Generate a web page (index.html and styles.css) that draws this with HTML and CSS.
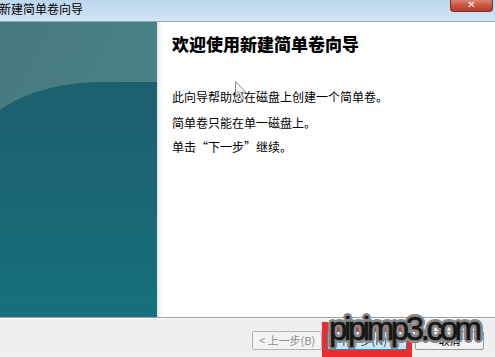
FILE: index.html
```html
<!DOCTYPE html>
<html lang="zh-CN">
<head>
<meta charset="utf-8">
<title>新建简单卷向导</title>
<link rel="stylesheet" href="styles.css">
</head>
<body>
<div class="window">
  <div class="titlebar">
    <span class="title">新建简单卷向导</span>
    <span class="close">✕</span>
  </div>
  <div class="main">
    <div class="side">
      <svg class="side-art" viewBox="0 0 157 295" preserveAspectRatio="none" width="157" height="295">
        <defs>
          <linearGradient id="top" x1="0" y1="0" x2="1" y2="1">
            <stop offset="0" stop-color="#457b80"/>
            <stop offset="1" stop-color="#4f868b"/>
          </linearGradient>
          <linearGradient id="low" x1="0" y1="0" x2="0" y2="1">
            <stop offset="0" stop-color="#1d5f6d"/>
            <stop offset="0.5" stop-color="#1a6775"/>
            <stop offset="1" stop-color="#16717d"/>
          </linearGradient>
        </defs>
        <rect x="0" y="0" width="157" height="295" fill="url(#top)"/>
        <path d="M0,88 C22,72 55,61 100,60 L157,60 L157,295 L0,295 Z" fill="url(#low)"/>
      </svg>
    </div>
    <div class="content">
      <h1 class="heading">欢迎使用新建简单卷向导</h1>
      <p class="line line-1">此向导帮助您在磁盘上创建一个简单卷。</p>
      <p class="line line-2">简单卷只能在单一磁盘上。</p>
      <p class="line line-3">单击“下一步”继续。</p>
    </div>
  </div>
  <div class="footer">
    <div class="btn btn-disabled">&lt; 上一步(B)</div>
    <div class="highlight">
      <div class="btn btn-next">下一步(N) &gt;</div>
    </div>
    <div class="btn btn-cancel">取消</div>
  </div>
  <svg class="cursor" width="13" height="20" viewBox="0 0 13 20">
    <path d="M0.5,0.5 L0.5,16 L4,12.5 L6.8,18.8 L9,17.8 L6.3,11.8 L11.2,11.8 Z" fill="#f4f4f4" stroke="#6a6a6a" stroke-width="1"/>
  </svg>
  <div class="watermark">pipimp3.com</div>
</div>
</body>
</html>
```

FILE: styles.css
```css
html, body {
  margin: 0;
  padding: 0;
}
body {
  width: 495px;
  height: 357px;
  overflow: hidden;
  font-family: "Noto Sans CJK SC", "Noto Sans", sans-serif;
  background: #f0f0f0;
}
.window {
  position: relative;
  width: 495px;
  height: 357px;
  display: flex;
  flex-direction: column;
  overflow: hidden;
}
.titlebar {
  height: 21px;
  border-bottom: 1px solid #8ea8bf;
  background: linear-gradient(180deg, #bcd6ee 0%, #c9dff2 60%, #d4e6f5 100%);
  display: flex;
  justify-content: space-between;
  align-items: flex-start;
  padding-right: 2px;
  box-sizing: content-box;
  flex: none;
}
.title {
  font-size: 12px;
  line-height: 17px;
  color: #000;
  margin-left: -1px;
}
.close {
  width: 43px;
  height: 12px;
  box-sizing: border-box;
  border: 1px solid #7d3224;
  border-top: none;
  border-radius: 0 0 4px 4px;
  background: linear-gradient(180deg, #dc8470 0%, #c9553f 50%, #b63c28 100%);
  color: #fff;
  font-size: 10px;
  line-height: 10px;
  text-align: center;
  font-weight: bold;
  font-family: "DejaVu Sans", sans-serif;
}
.main {
  height: 295px;
  display: flex;
  flex: none;
  background: #fff;
}
.side {
  width: 157px;
  flex: none;
  height: 295px;
}
.side-art {
  display: block;
}
.content {
  flex: 1;
  padding-left: 15px;
  background: linear-gradient(90deg, #dfe3e6 0px, #f6f7f8 3px, #ffffff 7px);
}
.heading {
  margin: 12px 0 0 0;
  font-size: 17px;
  line-height: 20px;
  font-weight: 900;
  color: #000;
}
.line {
  margin: 0;
  font-size: 12px;
  line-height: 16px;
  color: #000;
}
.line-1 { margin-top: 35px; }
.line-2 { margin-top: 10px; }
.line-3 { margin-top: 8px; }
.footer {
  flex: none;
  height: 39px;
  border-top: 1px solid #a0a0a0;
  box-shadow: inset 0 1px 0 #ffffff;
  background: #efefef;
  display: flex;
  justify-content: flex-end;
  align-items: flex-start;
  padding: 13px 11px 0 0;
  box-sizing: border-box;
}
.btn {
  height: 19px;
  box-sizing: border-box;
  border: 1px solid #9a9a9a;
  border-radius: 2px;
  background: #f3f3f3;
  font-size: 11px;
  line-height: 17px;
  text-align: center;
  color: #000;
}
.btn-disabled {
  width: 70px;
  color: #8d8d8d;
  border-color: #b3b3b3;
}
.highlight {
  width: 90px;
  height: 40px;
  margin-top: -9px;
  box-sizing: border-box;
  border: 5px solid #ea2d2e;
  border-bottom: none;
  background: #ea2d2e;
  padding: 4px 0 0 0;
}
.btn-next {
  width: 80px;
  border-color: #3c7fb1;
  background: linear-gradient(180deg, #eaf6fd, #bee6fd);
  color: #1a3a6a;
}
.btn-cancel {
  width: 69px;
  margin-left: 3px;
}
.cursor {
  position: absolute;
  left: 235px;
  top: 81px;
  opacity: 0.75;
}
.watermark {
  position: absolute;
  left: 329px;
  top: 312px;
  font-family: "Liberation Sans", Arial, sans-serif;
  font-size: 33px;
  line-height: 33px;
  letter-spacing: -3.4px;
  color: #161616;
  -webkit-text-stroke: 0.6px #161616;
  text-shadow:
    3px 0 0 #888, -3px 0 0 #888, 0 3px 0 #888, 0 -3px 0 #888,
    2px 2px 0 #888, -2px -2px 0 #888, 2px -2px 0 #888, -2px 2px 0 #888,
    0 0 3px #999;
}
```
